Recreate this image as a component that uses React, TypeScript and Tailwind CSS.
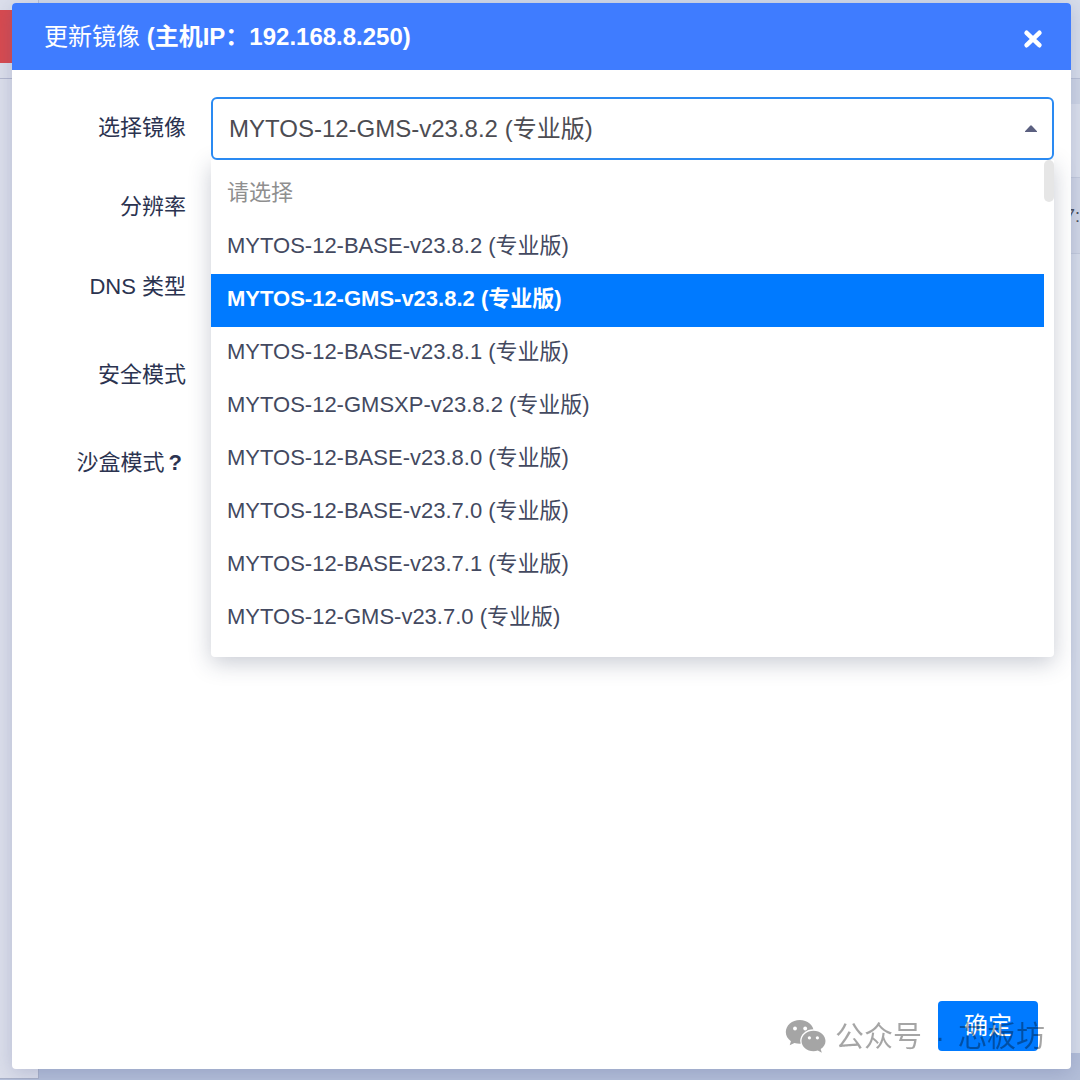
import { useState } from "react";
import type { ReactNode } from "react";

const images = [
  "MYTOS-12-BASE-v23.8.2 (专业版)",
  "MYTOS-12-GMS-v23.8.2 (专业版)",
  "MYTOS-12-BASE-v23.8.1 (专业版)",
  "MYTOS-12-GMSXP-v23.8.2 (专业版)",
  "MYTOS-12-BASE-v23.8.0 (专业版)",
  "MYTOS-12-BASE-v23.7.0 (专业版)",
  "MYTOS-12-BASE-v23.7.1 (专业版)",
  "MYTOS-12-GMS-v23.7.0 (专业版)",
];

function Backdrop() {
  return (
    <div aria-hidden="true" className="absolute inset-0 flex flex-col bg-[#b4bfd9]">
      <div className="flex flex-1 justify-between bg-[#d3dae9]">
        <div className="w-[39px] border-r border-[#b9c0d4] bg-[#dcdfeb]">
          <div className="mt-[10px] h-[53px] bg-[#d84a4f]" />
          <div className="mt-[15px] h-px bg-[#b3b8ce]" />
        </div>
        <div className="w-10 bg-[#d8deeb]">
          <div className="h-[79px] border-b border-[#b9c1d6]" />
          <div className="h-[25px] bg-[#ced5e5]" />
          <div className="h-[74px] border-b border-[#c5ccdd] bg-[#dbe0ec]" />
          <div className="flex h-[76px] items-center justify-end border-b border-[#c5ccdd] bg-[#d2d8e7] text-lg text-[#4b4f5c]">
            7:
          </div>
        </div>
      </div>
      <div className="h-[27px]">
        <div className="h-[26px] w-[39px] border-r border-b border-[#a9b1c8] bg-[#dcdfeb]" />
      </div>
    </div>
  );
}

function WeChatIcon() {
  return (
    <svg viewBox="0 0 42 36" className="h-9 w-[42px]" fill="currentColor" aria-hidden="true">
      <mask id="bubble-gap">
        <rect width="42" height="36" fill="white" />
        <ellipse cx="28.5" cy="22" rx="13.3" ry="11.8" fill="black" />
        <circle cx="10" cy="9.5" r="1.9" fill="black" />
        <circle cx="20.2" cy="9.5" r="1.9" fill="black" />
      </mask>
      <mask id="bubble-eyes">
        <rect width="42" height="36" fill="white" />
        <circle cx="24.4" cy="18.8" r="1.6" fill="black" />
        <circle cx="32.4" cy="18.8" r="1.6" fill="black" />
      </mask>
      <path
        mask="url(#bubble-gap)"
        d="M14.8 1C7 1 .8 6.4 .8 13.1c0 3.700 2 7 5.100 9.200L4.700 26.300l4.700-2.400c1.700.5 3.500.800 5.400.800 7.700 0 14-5.300 14-11.800S22.500 1 14.800 1z"
      />
      <path
        mask="url(#bubble-eyes)"
        d="M28.500 11.700c-6.600 0-12 4.600-12 10.300s5.400 10.300 12 10.300c1.500 0 3-.2 4.300-.7l4 2.200-1.100-3.700c3-1.900 4.800-4.800 4.800-8.100 0-5.700-5.400-10.300-12-10.300z"
      />
    </svg>
  );
}

function Row({ id, label, children }: { id: string; label: ReactNode; children: ReactNode }) {
  return (
    <div className="flex gap-[25px]">
      <label htmlFor={id} className="flex h-[60px] w-[158px] shrink-0 items-center justify-end text-[22px] text-[#2b3350]">
        {label}
      </label>
      <div className="relative min-w-0 flex-1">{children}</div>
    </div>
  );
}

function ImageSelect() {
  const [value, setValue] = useState(images[1]);
  return (
    <>
      <input
        id="image"
        role="combobox"
        aria-expanded="true"
        aria-controls="image-options"
        readOnly
        value={value}
        className="relative z-20 block h-[63px] w-full rounded-md border-2 border-[#2a8af2] bg-white px-4 pb-1 text-2xl text-[#4c4c52] outline-none"
      />
      <svg viewBox="0 0 14 8" className="absolute top-7 right-4 z-20 h-2 w-[14px]" fill="#5b6080">
        <path d="M6.2.7a1.2 1.2 0 0 1 1.6 0L13 6.2v.8H1v-.8z" />
      </svg>
      <div className="absolute top-full right-0 left-0 z-10 flex rounded-b bg-white pb-3 shadow-[0_6px_22px_rgba(40,50,85,0.25)]">
        <ul id="image-options" role="listbox" className="min-w-0 flex-1 pt-2 text-[22px] leading-[30px] text-[#434960]">
          <li role="option" aria-selected={false} className="flex h-[53px] items-center px-4 pb-1 text-[#8f8f8f]">
            请选择
          </li>
          {images.map((name) => (
            <li
              key={name}
              role="option"
              aria-selected={name === value}
              onClick={() => setValue(name)}
              className={
                name === value
                  ? "flex h-[53px] cursor-pointer items-center bg-[#007aff] px-4 pb-1 font-bold text-white"
                  : "flex h-[53px] cursor-pointer items-center px-4 pb-1"
              }
            >
              {name}
            </li>
          ))}
        </ul>
        <div className="w-[10px]">
          <div className="h-[42px] rounded-full bg-[#e6e6e6]" />
        </div>
      </div>
    </>
  );
}

export default function App() {
  return (
    <div className="relative flex min-h-screen flex-col overflow-hidden pt-[3px] pr-[9px] pb-[11px] pl-3 font-['Liberation_Sans','Noto_Sans_CJK_SC',sans-serif]">
      <Backdrop />
      <section
        role="dialog"
        aria-labelledby="title"
        className="relative flex flex-1 flex-col rounded bg-white shadow-[0_4px_20px_rgba(70,85,140,0.25)]"
      >
        <header className="flex h-[67px] items-center justify-between rounded-t bg-[#3f7cff] pr-6 pl-8 text-white">
          <h1 id="title" className="text-2xl">
            更新镜像 <b>(主机IP：192.168.8.250)</b>
          </h1>
          <button type="button" aria-label="关闭" className="mt-1 p-1">
            <svg viewBox="0 0 20 20" className="h-5 w-5" stroke="white" strokeWidth="4.6" strokeLinecap="round">
              <path d="M3.6 3.8l12.8 12.4M16.4 3.8L3.6 16.2" />
            </svg>
          </button>
        </header>

        <form className="flex flex-1 flex-col pt-[27px] pr-[17px] pl-4">
          <Row id="image" label="选择镜像">
            <ImageSelect />
          </Row>
          <div className="mt-4">
            <Row id="resolution" label="分辨率">
              <input id="resolution" className="h-[60px] w-full rounded border border-gray-200" />
            </Row>
          </div>
          <div className="mt-5">
            <Row id="dns" label="DNS 类型">
              <input id="dns" className="h-[60px] w-full rounded border border-gray-200" />
            </Row>
          </div>
          <div className="mt-7">
            <Row id="secure" label="安全模式">
              <input id="secure" type="checkbox" className="mt-5 block h-5 w-5" />
            </Row>
          </div>
          <div className="mt-7">
            <Row
              id="sandbox"
              label={
                <>
                  沙盒模式<b className="px-1">?</b>
                </>
              }
            >
              <input id="sandbox" type="checkbox" className="mt-5 block h-5 w-5" />
            </Row>
          </div>
          <div className="mt-auto flex justify-end pr-4 pb-[18px]">
            <button type="button" className="h-[50px] w-[100px] rounded bg-[#007aff] text-2xl text-white">
              确定
            </button>
          </div>
        </form>
      </section>

      <div className="pointer-events-none absolute right-[35px] bottom-[21px] z-30 flex items-center gap-2 text-[29px] leading-[44px] text-black opacity-35">
        <WeChatIcon />
        <span className="flex">
          公众号<span className="w-9 text-center">·</span>芯板坊
        </span>
      </div>
    </div>
  );
}
